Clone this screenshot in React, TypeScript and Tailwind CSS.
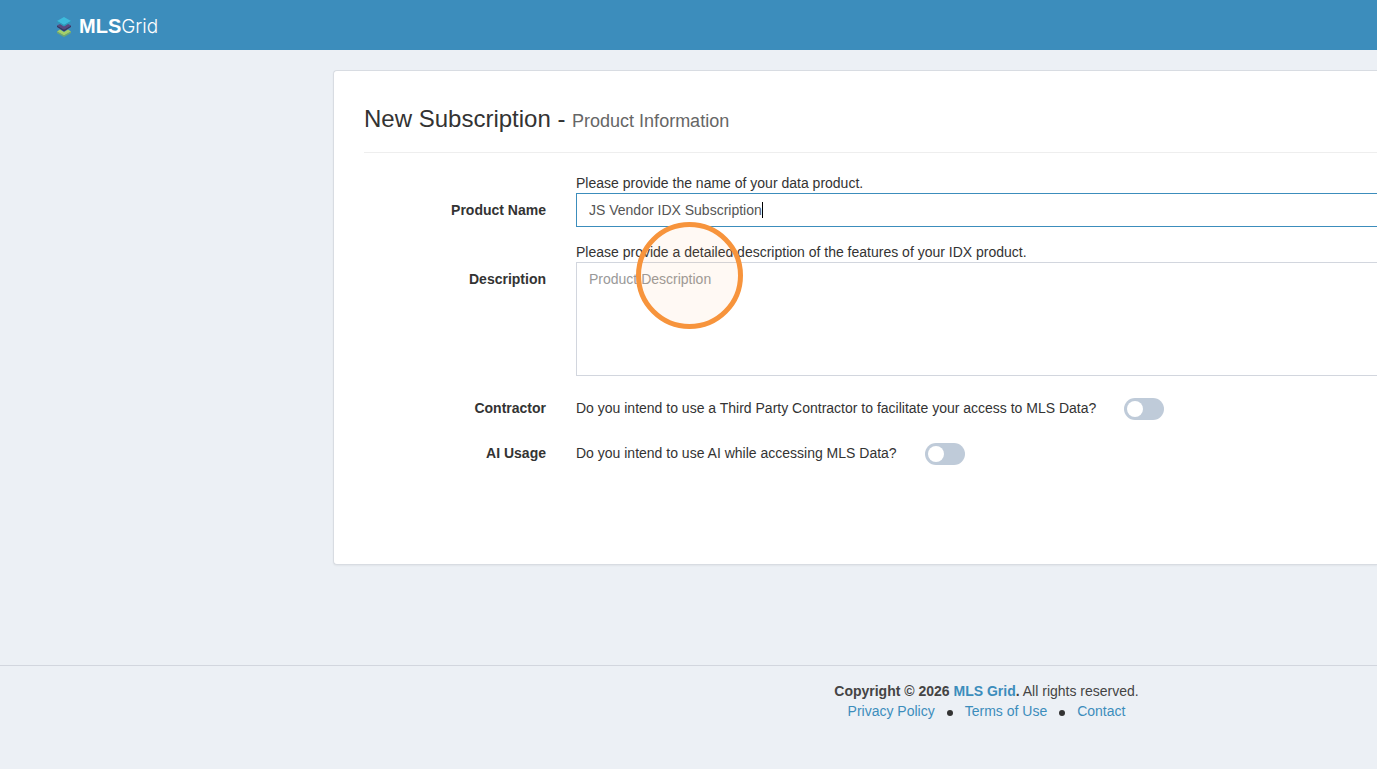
import React from "react";

const footLinks = ["Privacy Policy", "Terms of Use", "Contact"];

const questions = [
  {
    id: "contractor",
    label: "Contractor",
    text: "Do you intend to use a Third Party Contractor to facilitate your access to MLS Data?",
  },
  {
    id: "ai-usage",
    label: "AI Usage",
    text: "Do you intend to use AI while accessing MLS Data?",
  },
];

const Logo: React.FC = () => (
  <svg width="16" height="22" viewBox="0 0 16 22" aria-hidden="true">
    <path d="M1 15.5 4 13.500 8 16l4-2.500 3 2-7 4z" fill="#a5cf6a" />
    <path d="M1 15.500 8 19.500l7-4v1.500L8 21l-7-4z" fill="#74a86a" />
    <path d="M1 9.500 4 8l4 2.500L12 8l3 1.500L8 13.500z" fill="#5a4a80" />
    <path d="M1 9.500 8 13.500l7-4V11L8 15.500 1 11z" fill="#3a3560" />
    <path d="M1 5 8 1l7 4-7 4z" fill="#3dbbdc" />
    <path d="M1 5 8 9l7-4v1L8 10.200 1 6z" fill="#2b9cb8" />
  </svg>
);

const Header: React.FC = () => (
  <header className="flex items-center h-[50px] pl-14 bg-[#3c8dbc]">
    <a href="#" className="flex items-center gap-[7px] pt-[3px] text-xl leading-6 text-white">
      <Logo />
      <span>
        <b>MLS</b>
        <span className="font-['Inter','Liberation_Sans',sans-serif] text-[19px] font-light">Grid</span>
      </span>
    </a>
  </header>
);

const SubscriptionForm: React.FC = () => (
  <form className="grid grid-cols-[182px_minmax(0,1fr)] gap-x-[30px] pt-5">
    <label htmlFor="product-name" className="pt-[27px] font-bold text-right">
      Product Name
    </label>
    <div className="mb-[15px]">
      <p>Please provide the name of your data product.</p>
      <div className="relative">
        <input
          id="product-name"
          type="text"
          defaultValue="JS Vendor IDX Subscription"
          className="block w-full h-[34px] px-3 text-[#555] bg-white border border-r-0 border-[#3c8dbc] outline-none"
        />
        <span className="absolute left-[186px] top-[9px] w-px h-4 bg-black"></span>
      </div>
    </div>

    <label htmlFor="description" className="pt-[27px] font-bold text-right">
      Description
    </label>
    <div className="mb-[22px]">
      <p>Please provide a detailed description of the features of your IDX product.</p>
      <div className="relative">
        <textarea
          id="description"
          placeholder="Product Description"
          className="block w-full h-[114px] px-3 py-1.5 bg-white border border-r-0 border-[#d2d6de] outline-none resize-none placeholder:text-[#999]"
        ></textarea>
        <span className="absolute left-[60px] -top-10 size-[107px] border-[5px] border-[#f7943c] rounded-full bg-[#f7943c]/6 pointer-events-none"></span>
      </div>
    </div>

    {questions.map((item) => (
      <React.Fragment key={item.id}>
        <label htmlFor={item.id} className="font-bold text-right">
          {item.label}
        </label>
        <div className="flex items-start gap-7 h-[45px]">
          <p>{item.text}</p>
          <input
            id={item.id}
            type="checkbox"
            className="shrink-0 w-10 h-[22px] p-[3px] rounded-full appearance-none bg-[#bfcbd9] checked:bg-[#3c8dbc] before:block before:size-4 before:rounded-full before:bg-white checked:before:ml-[18px]"
          />
        </div>
      </React.Fragment>
    ))}
  </form>
);

const Footer: React.FC = () => (
  <footer className="pt-[15px] pb-12 pl-[596px] text-center text-[#444] border-t border-[#d2d6de]">
    <p>
      <b>
        Copyright © 2026{" "}
        <a href="#" className="text-[#3c8dbc]">
          MLS Grid
        </a>
        .
      </b>{" "}
      All rights reserved.
    </p>
    <div className="flex items-center justify-center">
      {footLinks.map((link, i) => (
        <React.Fragment key={link}>
          {i > 0 && <span className="size-1.5 mx-3 mt-1 rounded-full bg-[#333]"></span>}
          <a href="#" className="text-[#3c8dbc]">
            {link}
          </a>
        </React.Fragment>
      ))}
    </div>
  </footer>
);

const App: React.FC = () => {
  return (
    <div className="min-h-screen overflow-hidden bg-[#ecf0f5] font-['Liberation_Sans',Arial,sans-serif] text-sm leading-5 text-[#333]">
      <Header />
      <main className="pt-5 pb-[100px] pl-[333px]">
        <section className="pt-[30px] pb-[76px] pl-[30px] bg-white border border-r-0 border-[#d8dce2] rounded-l shadow-xs">
          <h1 className="pt-1 pb-[17px] text-2xl leading-7 border-b border-[#eee]">
            New Subscription - <small className="text-lg leading-7 text-[#666]">Product Information</small>
          </h1>
          <SubscriptionForm />
        </section>
      </main>
      <Footer />
    </div>
  );
};

export default App;
